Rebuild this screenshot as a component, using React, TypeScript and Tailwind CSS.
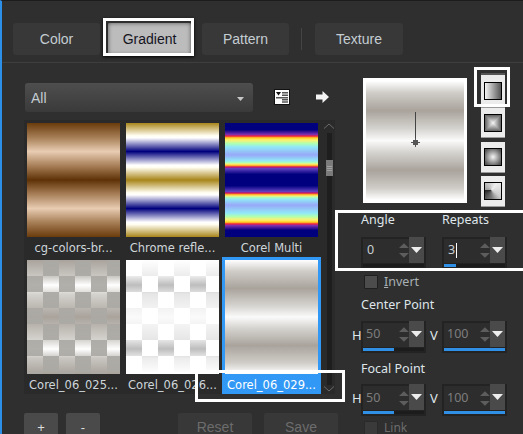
import type { ReactNode } from "react";

const tabClass =
  "flex h-8 items-center justify-center rounded-[3px] bg-[#383838] text-[14px] text-[#c4cdd2]";

function Swatch({ label, swatch, selected }: { label: string; swatch: string; selected?: boolean }) {
  return (
    <div className={selected ? "w-[99px]" : "w-[99px] px-[3px]"}>
      <div className={selected ? "border-x-[3px] border-t-[3px] border-[#3298f5]" : "pt-[3px]"}>
        <div className={`h-[114px] ${swatch}`} />
      </div>
      <div
        className={
          selected
            ? "h-5 truncate bg-[#3298f5] text-center font-['DejaVu_Sans',sans-serif] text-[11.5px] leading-[23px] text-white"
            : "h-5 truncate text-center font-['DejaVu_Sans',sans-serif] text-[11.5px] leading-[23px] text-[#cfd6da]"
        }
      >
        {label}
      </div>
    </div>
  );
}

function Spin({ value, bar, dim, caret }: { value: string; bar: string; dim?: boolean; caret?: boolean }) {
  return (
    <div className="h-8 w-[65px] bg-[#232323] p-[2px]">
      <div className="flex h-[24px] items-center bg-[#2d2d2d]">
        <span
          className={
            dim
              ? "w-[35px] pl-[3px] font-['Noto_Sans',sans-serif] text-[12.5px] text-[#7d7d7d]"
              : "w-[35px] pl-[4px] font-['Noto_Sans',sans-serif] text-[12.5px] text-[#c9d0d4]"
          }
        >
          {value}
          {caret && <span className="ml-px inline-block h-[15px] w-px bg-white align-middle" />}
        </span>
        <svg width="10" height="17" viewBox="0 0 10 17" className="ml-[2px]">
          <path d="M0 6 5 1l5 5zM0 11l5 5 5-5z" fill="#5d5d5d" />
        </svg>
        <div className="ml-auto flex h-[26px] w-[15px] -translate-y-px items-center justify-center bg-[#4a4a4a]">
          <svg width="11" height="6" viewBox="0 0 11 6">
            <path d="M0 0h11L5.500 6z" fill="#eeeeee" />
          </svg>
        </div>
      </div>
      <div className="mt-[1px] h-[3px] bg-[#1c1c1c]">
        <div className={`h-[3px] bg-[#3090e6] ${bar}`} />
      </div>
    </div>
  );
}

function TypeButton({ inner, className }: { inner: string; className: string }) {
  return (
    <div className={`flex w-6 items-center justify-center border-b border-[#9a9a9a] bg-[#ececec] ${className}`}>
      <div className={`size-[18px] border-[1.5px] border-black ${inner}`} />
    </div>
  );
}

function Caption({ children }: { children: ReactNode }) {
  return <div className="font-['Noto_Sans',sans-serif] text-[12.5px] leading-none text-[#dfe6ea]">{children}</div>;
}

export default function App() {
  return (
    <div className="relative flex h-[434px] w-[523px] flex-col overflow-hidden border-t border-l-2 border-t-[#1c1c1c] border-l-[#2c8fe8] bg-[#2f2f2f] font-['Liberation_Sans',sans-serif]">
      {/* tabs */}
      <div className="flex h-[62px] shrink-0 items-start gap-2 border-b border-[#3e3e3e] pt-[22px] pl-[11px]">
        <div className={`${tabClass} w-[87px]`}>Color</div>
        <div className="flex h-8 w-[83px] items-center justify-center rounded-[2px] bg-[#bcbcbc] text-[14px] text-[#14141e] shadow-[inset_0_0_4px_#555]">
          Gradient
        </div>
        <div className={`${tabClass} ml-[3px] w-[87px]`}>Pattern</div>
        <div className="mx-1 mt-[5px] h-[22px] w-px bg-[#444444]" />
        <div className={`${tabClass} ml-[1px] w-[88px]`}>Texture</div>
      </div>

      <div className="flex flex-1">
        {/* library column */}
        <div className="w-[359px] shrink-0 pt-5 pl-[22px]">
          <div className="flex items-center">
            <div className="ml-px flex h-[29px] w-[228px] items-center justify-between rounded-[3px] bg-[linear-gradient(#4e4e4e,#3a3a3a)] pt-[2px] pr-[9px] pl-[6px] text-[14px] text-[#c4cdd2]">
              All
              <svg width="7" height="4" viewBox="0 0 7 4">
                <path d="M0 0h7L3.500 4z" fill="#c8c8c8" />
              </svg>
            </div>
            <svg width="16" height="16" viewBox="0 0 16 16" className="ml-[21px] -mt-[2px]">
              <rect x="0.500" y="0.500" width="15" height="15" fill="#fdfdfd" stroke="#111" />
              <path d="M2 3h5L4.500 6.500z" fill="#111" />
              <path d="M8 3h6v1.500H8zM8 5.500h6V7H8zM2 8h12v1.500H2zM8 10h6v1.500H8zM8 12.200h6v1.500H8z" fill="#555" />
            </svg>
            <svg width="13" height="12" viewBox="0 0 13 12" className="ml-[26px] -mt-[2px]">
              <path d="M0 3.500h6.500V0L13 6l-6.500 6V8.500H0z" fill="#f4f4f4" />
            </svg>
          </div>

          <div className="mt-2 flex h-[274px] w-[311px] bg-[#2a2a2a]">
            <div className="w-[297px]">
              <div className="flex h-[137px]">
                <Swatch
                  label="cg-colors-br..."
                  swatch="bg-[linear-gradient(#6a3b0c,#a88058_13%,#e8ccb2_25%,#a57c55_38%,#5f3206_50%,#a57c55_62%,#e8ccb2_75%,#a88058_87%,#6a3b0c)]"
                />
                <Swatch
                  label="Chrome refle..."
                  swatch="bg-[linear-gradient(#a8851a,#fffdf0_11%,#ffffff_13%,#00007e_25%,#ffffff_37%,#fffdf0_39%,#a8851a_50%,#fffdf0_61%,#ffffff_63%,#00007e_75%,#ffffff_87%,#fffdf0_89%,#a8851a)]"
                />
                <Swatch
                  label="Corel Multi"
                  swatch="bg-[linear-gradient(#00007e_6%,#7c2fb0_10%,#f02040_11.500%,#ffd020_13%,#fff070_15%,#b0ffb0_18%,#90e8f8_21%,#98a8f8_28%,#90e8f8_33%,#b0ffb0_35%,#fff070_36%,#ffa020_37.500%,#d01060_38.500%,#6040c0_40%,#00007e_45%,#00007e_55%,#6040c0_60%,#d01060_61.500%,#ffa020_62.500%,#fff070_64%,#b0ffb0_65%,#90e8f8_67%,#98a8f8_72%,#90e8f8_79%,#b0ffb0_82%,#fff070_85%,#ffd020_87%,#f02040_88.500%,#7c2fb0_90%,#00007e_94%)]"
                />
              </div>
              <div className="flex h-[137px]">
                <Swatch
                  label="Corel_06_025..."
                  swatch="bg-[conic-gradient(#aba9a4ec_25%,transparent_0_50%,#aba9a4ec_0_75%,transparent_0),linear-gradient(#a9a39c,#c9c6c1_14%,#ffffff_22%,#d5d3ce_30%,#a9a39c_50%,#d5d3ce_70%,#ffffff_78%,#c9c6c1_86%,#a9a39c)] bg-[length:32px_32px,100%_100%]"
                />
                <Swatch
                  label="Corel_06_026..."
                  swatch="bg-[conic-gradient(transparent_25%,#ffffff_0_50%,transparent_0_75%,#ffffff_0),linear-gradient(#ffffff,#ececec_14%,#bdbdbd_22%,#e6e6e6_30%,#fafafa_50%,#e6e6e6_70%,#bdbdbd_78%,#ececec_86%,#ffffff)] bg-[length:32px_32px,100%_100%]"
                />
                <Swatch
                  selected
                  label="Corel_06_029..."
                  swatch="bg-[linear-gradient(#ffffff,#cfccc7_10%,#a9a39c_25%,#d5d3cf_40%,#fafafa_50%,#d5d3cf_60%,#a9a39c_75%,#cfccc7_90%,#ffffff)]"
                />
              </div>
            </div>
            {/* scrollbar */}
            <div className="ml-[3px] flex w-[10px] flex-col items-center pt-[3px]">
              <svg width="10" height="6" viewBox="0 0 10 6" fill="none" stroke="#6a6a6a">
                <path d="M0 5.500 5 1l5 4.500" />
              </svg>
              <div className="relative mt-[4px] h-[252px] w-[5px] bg-[#1e1e1e]">
                <div className="absolute top-[27px] -left-[1px] flex h-4 w-[7px] flex-col justify-center gap-px bg-[#7b7b7b] px-px">
                  <div className="h-px bg-[#a0a0a0]" />
                  <div className="h-px bg-[#a0a0a0]" />
                  <div className="h-px bg-[#a0a0a0]" />
                </div>
              </div>
              <svg width="10" height="6" viewBox="0 0 10 6" fill="none" stroke="#6a6a6a" className="mt-[1px]">
                <path d="M0 .5 5 5l5-4.500" />
              </svg>
            </div>
          </div>

          {/* bottom buttons */}
          <div className="mt-[19px] flex items-start">
            <div className="flex h-[30px] w-[34px] items-start justify-center rounded-[2px] bg-[#4a4a4a] pt-[5px] text-[13px] text-[#dddddd]">+</div>
            <div className="ml-2 flex h-[30px] w-[34px] items-start justify-center rounded-[2px] bg-[#4a4a4a] pt-[5px] text-[13px] text-[#dddddd]">-</div>
            <div className="ml-[78px] flex h-[30px] w-[74px] items-start justify-center rounded-[2px] bg-[#383838] pt-[4px] text-[14px] text-[#6c6c6c]">Reset</div>
            <div className="ml-3 flex h-[30px] w-[74px] items-start justify-center rounded-[2px] bg-[#383838] pt-[4px] text-[14px] text-[#6c6c6c]">Save</div>
          </div>
        </div>

        {/* settings column */}
        <div className="flex-1 pt-[15px]">
          <div className="flex">
            <div className="ml-[2px] h-[125px] w-[104px] border-[3px] border-white bg-[linear-gradient(#ffffff,#cfccc7_10%,#a9a39c_25%,#d5d3cf_40%,#fafafa_50%,#d5d3cf_60%,#a9a39c_75%,#cfccc7_90%,#ffffff)] pt-[31px]">
              <div className="mx-auto h-[28px] w-px bg-[#444444]" />
              <svg width="9" height="9" viewBox="0 0 9 9" className="mx-auto -mt-[2px]" fill="#555555">
                <path d="M4 0h1v3H4zM4 6h1v3H4zM0 4h3v1H0zM6 4h3v1H6zM2 2h5v5H2z" />
              </svg>
            </div>
            <div className="-mt-[5px] ml-[14px] flex flex-col">
              <TypeButton className="h-[35px] border-t-2 border-t-[#555555]" inner="bg-[linear-gradient(90deg,#f5f5f5,#555555)]" />
              <TypeButton
                className="h-[30px]"
                inner="bg-[linear-gradient(90deg,#606060,#f5f5f5,#606060),linear-gradient(#606060,#f5f5f5,#606060)] bg-blend-darken"
              />
              <TypeButton className="mt-[4px] h-[31px]" inner="bg-[radial-gradient(circle,#f5f5f5,#555555_85%)]" />
              <TypeButton
                className="mt-[3px] h-[31px]"
                inner="bg-[conic-gradient(from_270deg_at_40%_45%,#999999,#eeeeee_35%,#cccccc_60%,#777777_75%,#222222)]"
              />
            </div>
          </div>

          <div className="mt-[7px] flex gap-4">
            <div className="w-[65px]"><Caption>Angle</Caption></div>
            <Caption>Repeats</Caption>
          </div>
          <div className="mt-[10px] flex gap-4">
            <Spin value="0" bar="w-0" />
            <Spin value="3" bar="w-[12px]" caret />
          </div>

          <div className="mt-[4px] flex items-center pl-[3px]">
            <div className="size-[14px] rounded-[1px] border border-[#1f1f1f] bg-[#4c4c4c]" />
            <span className="ml-[6px] font-['Noto_Sans',sans-serif] text-[12.5px] text-[#a9b0b4]">
              <span className="underline">I</span>nvert
            </span>
          </div>
          <div className="mt-[8px]"><Caption>Center Point</Caption></div>
          <div className="relative mt-[9px] flex gap-4">
            <span className="absolute top-[5px] -left-[9px] font-['Noto_Sans',sans-serif] text-[13px] text-[#dfe6ea]">H</span>
            <Spin value="50" bar="w-[31px]" dim />
            <span className="absolute top-[5px] left-[69px] font-['Noto_Sans',sans-serif] text-[13px] text-[#dfe6ea]">V</span>
            <Spin value="100" bar="w-full" dim />
          </div>
          <div className="mt-[10px]"><Caption>Focal Point</Caption></div>
          <div className="relative mt-[9px] flex gap-4">
            <span className="absolute top-[5px] -left-[9px] font-['Noto_Sans',sans-serif] text-[13px] text-[#dfe6ea]">H</span>
            <Spin value="50" bar="w-[31px]" dim />
            <span className="absolute top-[5px] left-[69px] font-['Noto_Sans',sans-serif] text-[13px] text-[#dfe6ea]">V</span>
            <Spin value="100" bar="w-full" dim />
          </div>
          <div className="mt-[5px] flex items-start pl-[3px]">
            <div className="size-[14px] rounded-[1px] border border-[#2a2a2a] bg-[#3a3a3a]" />
            <span className="ml-[6px] font-['Noto_Sans',sans-serif] text-[12px] leading-[13px] text-[#6c6c6c]">Link</span>
          </div>
        </div>
      </div>

      {/* white annotation frames drawn over the dialog */}
      <div className="absolute top-[17px] left-[101px] h-[38px] w-[91px] border-[3px] border-white shadow-[0_1px_3px_#000]" />
      <div className="absolute top-[66px] left-[472px] h-10 w-9 border-[3px] border-white" />
      <div className="absolute top-[209px] left-[333px] h-[61px] w-[190px] border-y-[3px] border-l-[3px] border-white" />
      <div className="absolute top-[369px] left-[193px] h-8 w-[150px] border-[3px] border-white" />
    </div>
  );
}
